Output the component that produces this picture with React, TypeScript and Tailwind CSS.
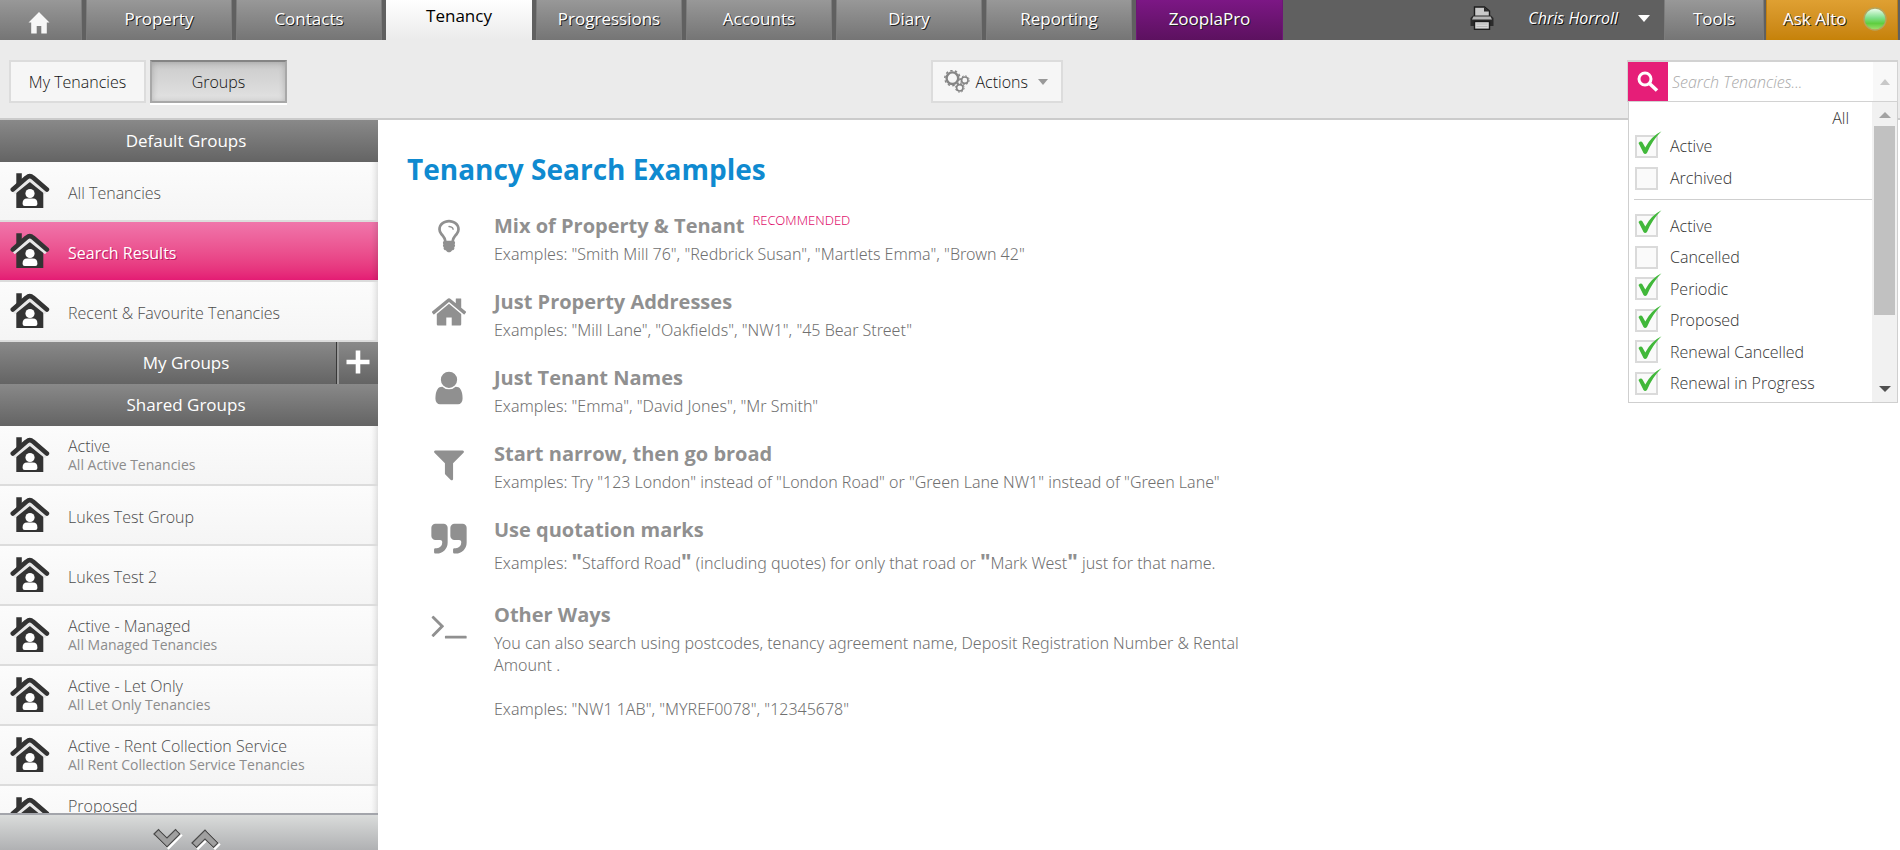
import type { ReactNode } from 'react';

const tabClass =
  'flex w-[146px] mr-1 items-center justify-center border-x border-[#7c7c7c] bg-linear-to-b from-[#989898] to-[#757575] pb-0.5 text-white [text-shadow:1px_1px_0_#222]';

function HomeIcon() {
  return (
    <svg viewBox="0 0 22 22" className="mt-1.5 h-[22px] w-[22px]" aria-hidden="true">
      <path d="M11 0 L21.5 10.5 H18.8 V21.5 H13.3 V14 H8.7 V21.5 H3.2 V10.5 H0.5 Z" fill="#f7f7f7" />
    </svg>
  );
}

function PrinterIcon() {
  return (
    <svg viewBox="0 0 24 24" className="h-6 w-6" aria-hidden="true">
      <path d="M4.5 10 V1 H14.5 L19.5 5 V10" fill="#c9c9c9" stroke="#1c1c1c" strokeWidth="1.4" />
      <path d="M14 1 V5.5 H19.5 Z" fill="#2b2b2b" />
      <path d="M3 9.5 H21 L23.5 12 V20 H0.5 V12 Z" fill="#2b2b2b" />
      <path d="M3.5 10.5 H20.5 L22 13.5 H2 Z" fill="#b5b5b5" />
      <rect x="4.5" y="15.5" width="15" height="7.8" fill="#d6d6d6" stroke="#1c1c1c" strokeWidth="1.4" />
      <path d="M6.5 18 H17.5 M6.5 20.5 H17.5" stroke="#b0b0b0" strokeWidth="0.8" />
    </svg>
  );
}

function GearsIcon() {
  return (
    <svg viewBox="0 0 26 23" className="h-[23px] w-[26px]" fill="none" stroke="#858585" aria-hidden="true">
      <circle cx="8.4" cy="8.2" r="5.8" strokeWidth="2.4" />
      <circle cx="8.4" cy="8.2" r="7.6" strokeWidth="1.4" strokeDasharray="2.4 2.37" />
      <circle cx="20.8" cy="10.2" r="3.2" strokeWidth="1.6" />
      <circle cx="20.8" cy="10.2" r="4.4" strokeWidth="1" strokeDasharray="1.7 1.75" />
      <circle cx="15.8" cy="17.8" r="3.2" strokeWidth="1.6" />
      <circle cx="15.8" cy="17.8" r="4.4" strokeWidth="1" strokeDasharray="1.7 1.75" />
    </svg>
  );
}

function TenancyIcon() {
  return (
    <svg viewBox="0 0 40 38" className="h-[38px] w-10 shrink-0" aria-hidden="true">
      <path d="M6.3 15.5 L19.8 5.5 L33.3 15.5 V36 H6.3 Z" fill="#333" />
      <path d="M2.5 19.5 L19.8 5.6 L37.2 19.5" fill="none" stroke="#e8e8e8" strokeWidth="7" strokeLinejoin="round" />
      <path d="M6.3 1.2 H11.8 V8.5 L6.3 13 Z" fill="#333" />
      <path d="M2.8 17.6 L16.6 5.6 Q19.8 2.6 23 5.6 L36.9 17.6" fill="none" stroke="#333" strokeWidth="4.6" strokeLinecap="round" />
      <circle cx="20" cy="21.5" r="4.6" fill="#fff" />
      <path d="M12.6 31.5 Q12.6 26.6 17 26.6 H23 Q27.4 26.6 27.4 31.5 V32 Q27.4 34 25.4 34 H14.6 Q12.6 34 12.6 32 Z" fill="#fff" />
    </svg>
  );
}

function Chevron({ up = false }: { up?: boolean }) {
  const d = up ? 'M2 16 L15 3 L28 16 L23.5 20.5 L15 12 L6.5 20.5 Z' : 'M2 7 L6.5 2.5 L15 11 L23.5 2.5 L28 7 L15 20 Z';
  return (
    <svg viewBox="0 0 31 24" className="h-6 w-[31px]" aria-hidden="true">
      <path d={d} fill="#fff" stroke="#fff" strokeWidth="1.5" transform="translate(1.6 1.6)" />
      <path d={d} fill="#a0a0a0" stroke="#4a4a4a" strokeWidth="1.2" />
    </svg>
  );
}

function Glyph({ d }: { d: string }) {
  return (
    <svg viewBox="0 0 1792 1792" className="mt-1.5 h-[38px] w-[38px] shrink-0" fill="#909090" aria-hidden="true">
      <path d={d} />
    </svg>
  );
}

const glyphs = {
  bulb: 'M1120 576q0 13-9.5 22.5t-22.5 9.5-22.5-9.5-9.5-22.5q0-46-54-71t-106-25q-13 0-22.5-9.5t-9.5-22.5 9.5-22.5 22.5-9.5q50 0 99.5 16t87 54 37.5 90zm160 0q0-72-34.5-134t-90-101.5-123-62-136.5-22.5-136.5 22.5-123 62-90 101.5-34.5 134q0 101 68 180 10 11 30.5 33t30.5 33q128 153 141 298h228q13-145 141-298 10-11 30.5-33t30.5-33q68-79 68-180zm128 0q0 155-103 268-45 49-74.5 87t-59.5 95.5-34 107.5q47 28 47 82 0 37-25 64 25 27 25 64 0 52-45 81 13 23 13 47 0 46-31.5 71t-77.5 25q-20 44-60 70t-87 26-87-26-60-70q-46 0-77.5-25t-31.5-71q0-24 13-47-45-29-45-81 0-37 25-64-25-27-25-64 0-54 47-82-4-50-34-107.5t-59.5-95.5-74.5-87q-103-113-103-268 0-99 44.5-184.5t117-142 164-89 186.5-32.5 186.5 32.5 164 89 117 142 44.5 184.5z',
  home: 'M1472 992v480q0 26-19 45t-45 19h-384v-384h-256v384h-384q-26 0-45-19t-19-45v-480q0-1 .5-3t.5-3l575-474 575 474q1 2 1 6zm223-69l-62 74q-8 9-21 11h-3q-13 0-21-7l-692-577-692 577q-12 8-24 7-13-2-21-11l-62-74q-8-10-7-23.5t11-21.5l719-599q32-26 76-26t76 26l244 204v-195q0-14 9-23t23-9h192q14 0 23 9t9 23v408l219 182q10 8 11 21.5t-7 23.5z',
  user: 'M1536 1399q0 109-62.5 187t-150.5 78h-854q-88 0-150.5-78t-62.5-187q0-85 8.5-160.5t31.5-152 58.5-131 94-89 134.5-34.5q131 128 313 128t313-128q76 0 134.5 34.5t94 89 58.5 131 31.5 152 8.5 160.5zm-256-887q0 159-112.5 271.5t-271.5 112.5-271.5-112.5-112.5-271.5 112.5-271.5 271.5-112.5 271.5 112.5 112.5 271.5z',
  filter: 'M1595 295q17 41-14 70l-493 493v742q0 42-39 59-13 5-25 5-27 0-45-19l-256-256q-19-19-19-45v-486l-493-493q-31-29-14-70 17-39 59-39h1280q42 0 59 39z',
  quote: 'M832 320v704q0 104-40.5 198.5t-109.5 163.5-163.5 109.5-198.5 40.5h-64q-26 0-45-19t-19-45v-128q0-26 19-45t45-19h64q106 0 181-75t75-181v-32q0-40-28-68t-68-28h-224q-80 0-136-56t-56-136v-384q0-80 56-136t136-56h384q80 0 136 56t56 136zm896 0v704q0 104-40.5 198.5t-109.5 163.5-163.5 109.5-198.5 40.5h-64q-26 0-45-19t-19-45v-128q0-26 19-45t45-19h64q106 0 181-75t75-181v-32q0-40-28-68t-68-28h-224q-80 0-136-56t-56-136v-384q0-80 56-136t136-56h384q80 0 136 56t56 136z',
  terminal: 'M649 983l-466 466q-10 10-23 10t-23-10l-50-50q-10-10-10-23t10-23l393-393-393-393q-10-10-10-23t10-23l50-50q10-10 23-10t23 10l466 466q10 10 10 23t-10 23zm1079 457v64q0 14-9 23t-23 9h-960q-14 0-23-9t-9-23v-64q0-14 9-23t23-9h960q14 0 23 9t9 23z',
};

function GroupHeader({ title, action }: { title: string; action?: ReactNode }) {
  return (
    <div className="flex h-[42px] shrink-0 items-center bg-linear-to-b from-[#898989] to-[#646464] text-white">
      <h2 className={action ? 'flex-1 pl-9 text-center text-[17px]' : 'flex-1 pr-1.5 text-center text-[17px]'}>{title}</h2>
      {action}
    </div>
  );
}

function GroupRow({ title, sub, selected = false }: { title: string; sub?: string; selected?: boolean }) {
  return (
    <a
      href="#"
      className={
        'flex h-[60px] shrink-0 items-center gap-[18px] border-b-2 border-[#dcdcdc] pl-2.5 shadow-[inset_-8px_0_6px_-6px_rgba(0,0,0,0.14)] ' +
        (selected
          ? 'bg-linear-to-b from-[#f075ab] to-[#e41b74] text-white [text-shadow:1px_1px_0_#c01460]'
          : 'bg-linear-to-b from-[#fcfcfc] to-[#f5f5f5] font-light text-[#4c4c4c]')
      }
    >
      <TenancyIcon />
      <span className={sub ? 'flex flex-col pb-0.5' : 'flex flex-col pt-1'}>
        <span className="text-base/5">{title}</span>
        {sub && <span className="text-sm/[17px] font-normal text-[#8c8c8c]">{sub}</span>}
      </span>
    </a>
  );
}

function Example({ icon, title, tag, children }: { icon: string; title: string; tag?: string; children: ReactNode }) {
  return (
    <section className="flex gap-[26px] pb-[22px] pl-[23px]">
      <Glyph d={icon} />
      <div className="max-w-[760px]">
        <h3 className="flex gap-2 text-xl/[30px] font-bold text-[#909090]">
          {title}
          {tag && (
            <span className="font-['Noto_Sans',sans-serif] text-[13px]/[18px] font-light text-[#e0106c]">{tag}</span>
          )}
        </h3>
        <div className="mt-0.5 font-['Noto_Sans',sans-serif] text-base/[22px] font-light text-[#707070]">{children}</div>
      </div>
    </section>
  );
}

function Quote() {
  return <b className="text-[22px]/[26px] font-bold text-[#909090]">&quot;</b>;
}

function Filter({ id, label, on = false }: { id: string; label: string; on?: boolean }) {
  return (
    <div className="flex flex-1 items-center gap-3 pl-1.5">
      <span className="relative h-[23px] w-[23px] shrink-0">
        <input
          id={id}
          type="checkbox"
          defaultChecked={on}
          className="peer block h-[23px] w-[23px] appearance-none border-2 border-[#dadada] bg-[#fafafa]"
        />
        <svg
          viewBox="0 0 28 28"
          className="pointer-events-none absolute -top-1 left-0 hidden h-7 w-7 peer-checked:block"
          aria-hidden="true"
        >
          <path d="M3.5 12 Q6 9.5 7.5 11.5 L10.3 16.5 Q16 5.5 26.5 0.3 Q17.5 9 12 22 Q10 24 8.5 22 Z" fill="#41b83a" />
        </svg>
      </span>
      <label htmlFor={id} className="text-base/5 font-light text-[#333]">
        {label}
      </label>
    </div>
  );
}

const tabsAfter = ['Progressions', 'Accounts', 'Diary', 'Reporting'];

const sharedGroups = [
  { title: 'Active', sub: 'All Active Tenancies' },
  { title: 'Lukes Test Group' },
  { title: 'Lukes Test 2' },
  { title: 'Active - Managed', sub: 'All Managed Tenancies' },
  { title: 'Active - Let Only', sub: 'All Let Only Tenancies' },
  { title: 'Active - Rent Collection Service', sub: 'All Rent Collection Service Tenancies' },
  { title: 'Proposed', sub: '\u00a0' },
];

const statusFilters = [
  { label: 'Active', on: true },
  { label: 'Cancelled', on: false },
  { label: 'Periodic', on: true },
  { label: 'Proposed', on: true },
  { label: 'Renewal Cancelled', on: true },
  { label: 'Renewal in Progress', on: true },
];

export default function App() {
  return (
    <div className="flex h-screen flex-col overflow-hidden bg-white font-['Open_Sans','Noto_Sans',sans-serif]">
      <header className="flex h-10 shrink-0 bg-[#606060] text-[17px]">
        <nav className="flex" aria-label="Main">
          <a
            href="#"
            aria-label="Home"
            className="mr-1 flex w-[82px] items-center justify-center border-r border-[#7c7c7c] bg-linear-to-b from-[#989898] to-[#757575] pr-1"
          >
            <HomeIcon />
          </a>
          <a href="#" className={tabClass}>Property</a>
          <a href="#" className={tabClass}>Contacts</a>
          <a
            href="#"
            aria-current="page"
            className="mr-1 flex w-[146px] items-center justify-center bg-linear-to-b from-white to-[#ebebeb] pb-2 text-black"
          >
            Tenancy
          </a>
          {tabsAfter.map((t) => (
            <a key={t} href="#" className={tabClass}>{t}</a>
          ))}
          <a
            href="#"
            className="flex w-[147px] items-center justify-center border-x border-[#6d1676] bg-linear-to-b from-[#7c1785] to-[#5c115f] pb-0.5 text-white [text-shadow:1px_1px_0_#222]"
          >
            ZooplaPro
          </a>
        </nav>
        <div className="ml-auto flex">
          <button type="button" aria-label="Print" className="mr-[34px] flex items-center pb-1">
            <PrinterIcon />
          </button>
          <button
            type="button"
            className="mr-3.5 flex items-center gap-5 pb-1 text-base italic text-white [text-shadow:1px_1px_0_#111]"
          >
            Chris Horroll
            <svg viewBox="0 0 12 7" className="h-[7px] w-3" aria-hidden="true">
              <path d="M0 0 H12 L6 7 Z" fill="#fff" />
            </svg>
          </button>
          <button
            type="button"
            className="mr-0.5 w-[100px] border-x border-[#7c7c7c] bg-linear-to-b from-[#989898] to-[#757575] pb-0.5 text-white [text-shadow:1px_1px_0_#222]"
          >
            Tools
          </button>
          <button
            type="button"
            className="mr-0.5 flex w-[132px] items-center justify-between border-x border-[#c07f10] bg-linear-to-b from-[#dfa032] to-[#c68208] pb-0.5 pl-4 pr-2.5 text-white [text-shadow:1px_1px_0_#222]"
          >
            Ask Alto
            <svg viewBox="0 0 24 24" className="h-6 w-6" aria-hidden="true">
              <defs>
                <linearGradient id="orb" x1="0" y1="0" x2="0" y2="1">
                  <stop offset="0" stopColor="#f2fff2" />
                  <stop offset="0.45" stopColor="#7fe08c" />
                  <stop offset="0.7" stopColor="#5fce3f" />
                  <stop offset="1" stopColor="#a4e070" />
                </linearGradient>
              </defs>
              <circle cx="12" cy="12" r="11" fill="url(#orb)" stroke="#b5a45c" strokeWidth="1.4" />
            </svg>
          </button>
        </div>
      </header>

      <div className="relative z-10 flex h-20 shrink-0 items-start justify-between border-b-2 border-[#cbcbcb] bg-[#ebebeb] pl-[9px] pr-0.5 pt-5">
        <div className="flex flex-1 gap-1">
          <button
            type="button"
            className="h-[43px] w-[137px] border-2 border-[#dcdcdc] bg-[#f6f6f6] text-base font-light text-[#111]"
          >
            My Tenancies
          </button>
          <button
            type="button"
            aria-pressed="true"
            className="h-[43px] w-[137px] border-2 border-[#a8a8a8] border-t-[#858585] bg-linear-to-b from-[#cbcbcb] to-[#e2e2e2] text-base font-light text-[#111] shadow-[inset_0_1px_6px_rgba(0,0,0,0.2),0_2px_0_#fff]"
          >
            Groups
          </button>
        </div>
        <button
          type="button"
          className="ml-[86px] flex h-[43px] w-[132px] items-center border-2 border-[#dcdcdc] bg-[#f6f6f6] pl-[11px] text-base font-light text-[#111]"
        >
          <GearsIcon />
          <span className="ml-1.5">Actions</span>
          <svg viewBox="0 0 10 6" className="ml-2.5 h-1.5 w-2.5" aria-hidden="true">
            <path d="M0 0 H10 L5 6 Z" fill="#999" />
          </svg>
        </button>
        <div className="flex flex-1 justify-end">
          <div className="relative w-[271px]">
            <div className="flex h-[42px] border border-t-2 border-[#d2d2d2] bg-white">
              <button type="button" aria-label="Search" className="flex w-10 items-center justify-center bg-[#e61e78]">
                <svg viewBox="0 0 22 22" className="h-[22px] w-[22px]" fill="none" stroke="#fff" aria-hidden="true">
                  <circle cx="8" cy="8" r="6" strokeWidth="3" />
                  <path d="M12.5 12.5 L20 19.5" strokeWidth="3.6" />
                </svg>
              </button>
              <input
                type="text"
                aria-label="Search Tenancies"
                placeholder="Search Tenancies..."
                className="min-w-0 flex-1 pl-1 text-base font-light italic outline-none placeholder:text-[#a8a8a8]"
              />
              <button type="button" aria-label="Hide filters" className="flex w-6 items-center justify-center bg-[#f8f8f8]">
                <svg viewBox="0 0 10 6" className="h-1.5 w-2.5" aria-hidden="true">
                  <path d="M0 6 H10 L5 0 Z" fill="#c8c8c8" />
                </svg>
              </button>
            </div>
            <div className="absolute left-px right-0 top-[42px] flex h-[301px] overflow-hidden border border-t-0 border-[#cfcfcf] bg-white">
              <div className="flex flex-1 flex-col">
                <button type="button" className="mr-[23px] mt-1 self-end text-base/6 font-light text-[#333]">
                  All
                </button>
                <div role="group" aria-label="State" className="flex h-16 shrink-0 flex-col">
                  <Filter id="state-active" label="Active" on />
                  <Filter id="state-archived" label="Archived" />
                </div>
                <hr className="mb-2.5 ml-[5px] mt-[5px] border-[#cfcfcf]" />
                <div role="group" aria-label="Status" className="flex h-[189px] shrink-0 flex-col">
                  {statusFilters.map((f) => (
                    <Filter key={f.label} id={'status-' + f.label} label={f.label} on={f.on} />
                  ))}
                </div>
              </div>
              <div className="flex w-[25px] flex-col items-center bg-[#f1f1f1] px-0.5" aria-hidden="true">
                <svg viewBox="0 0 12 6" className="mb-2 mt-2.5 h-1.5 w-3">
                  <path d="M0 6 H12 L6 0 Z" fill="#a3a3a3" />
                </svg>
                <div className="h-[189px] w-full bg-[#c1c1c1]" />
                <svg viewBox="0 0 12 6" className="mb-2.5 mt-auto h-1.5 w-3">
                  <path d="M0 0 H12 L6 6 Z" fill="#505050" />
                </svg>
              </div>
            </div>
          </div>
        </div>
      </div>

      <div className="flex min-h-0 flex-1">
        <aside className="flex w-[378px] shrink-0 flex-col">
          <div className="flex min-h-0 flex-1 flex-col overflow-hidden">
            <GroupHeader title="Default Groups" />
            <GroupRow title="All Tenancies" />
            <GroupRow title="Search Results" selected />
            <GroupRow title="Recent & Favourite Tenancies" />
            <GroupHeader
              title="My Groups"
              action={
                <button
                  type="button"
                  aria-label="Add group"
                  className="flex h-full w-[42px] items-center justify-center border-l border-[#383838] pb-0.5 shadow-[inset_2px_0_0_#9a9a9a]"
                >
                  <svg viewBox="0 0 24 24" className="h-6 w-6" aria-hidden="true">
                    <path d="M12 0.5 V23.5 M0.5 12 H23.5" stroke="#fff" strokeWidth="4.6" />
                  </svg>
                </button>
              }
            />
            <GroupHeader title="Shared Groups" />
            {sharedGroups.map((g) => (
              <GroupRow key={g.title} title={g.title} sub={g.sub} />
            ))}
          </div>
          <div className="flex h-[37px] shrink-0 items-start justify-center gap-[7px] border-t-2 border-[#a3a5ab] bg-linear-to-b from-[#dadcdb] to-[#b0b1b3] pr-1.5 pt-3">
            <button type="button" aria-label="Scroll down">
              <Chevron />
            </button>
            <button type="button" aria-label="Scroll up">
              <Chevron up />
            </button>
          </div>
        </aside>

        <main className="flex-1 pl-[29px] pt-[29px]">
          <h1 className="mb-[22px] text-[28px]/10 font-bold text-[#0f8ad0]">Tenancy Search Examples</h1>
          <Example icon={glyphs.bulb} title="Mix of Property & Tenant" tag="RECOMMENDED">
            <p>Examples: "Smith Mill 76", "Redbrick Susan", "Martlets Emma", "Brown 42"</p>
          </Example>
          <Example icon={glyphs.home} title="Just Property Addresses">
            <p>Examples: "Mill Lane", "Oakfields", "NW1", "45 Bear Street"</p>
          </Example>
          <Example icon={glyphs.user} title="Just Tenant Names">
            <p>Examples: "Emma", "David Jones", "Mr Smith"</p>
          </Example>
          <Example icon={glyphs.filter} title="Start narrow, then go broad">
            <p>Examples: Try "123 London" instead of "London Road" or "Green Lane NW1" instead of "Green Lane"</p>
          </Example>
          <Example icon={glyphs.quote} title="Use quotation marks">
            <p className="mb-1">
              Examples: <Quote />Stafford Road<Quote /> (including quotes) for only that road or <Quote />Mark West<Quote /> just
              for that name.
            </p>
          </Example>
          <Example icon={glyphs.terminal} title="Other Ways">
            <p className="mb-[22px]">
              You can also search using postcodes, tenancy agreement name, Deposit Registration Number &amp; Rental Amount .
            </p>
            <p>Examples: "NW1 1AB", "MYREF0078", "12345678"</p>
          </Example>
        </main>
      </div>
    </div>
  );
}
